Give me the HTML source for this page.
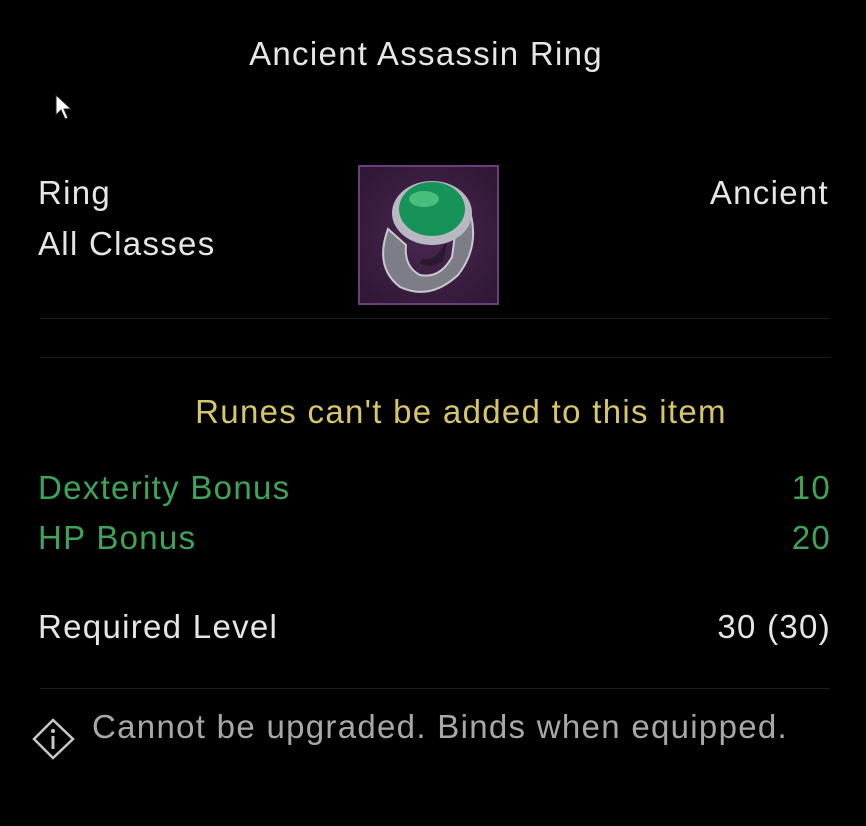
<!DOCTYPE html>
<html><head><meta charset="utf-8"><style>
html,body{margin:0;padding:0;background:#000;}
body{width:866px;height:826px;position:relative;overflow:hidden;font-family:"Liberation Sans",sans-serif;font-size:33px;letter-spacing:1.3px;color:#e6e6e6;}
.t{position:absolute;white-space:nowrap;line-height:1;}
.g{color:#3fa45a;}
.y{color:#d6c66a;}
.line{position:absolute;left:40px;width:790px;height:1px;background:#1d1d1d;}
</style></head><body>
<div class="t" style="left:0;width:852px;text-align:center;top:37px;">Ancient Assassin Ring</div>
<svg style="position:absolute;left:55px;top:94px" width="20" height="28" viewBox="0 0 20 28"><path d="M1 1 L1 21 L6 16 L10 25 L13 24 L9 15 L16 15 Z" fill="#fff" stroke="#222" stroke-width="1"/></svg>
<div class="t" style="left:38px;top:176px;">Ring</div>
<div class="t" style="left:38px;top:227px;">All Classes</div>
<div class="t" style="right:37px;top:176px;">Ancient</div>
<div style="position:absolute;left:358px;top:165px;width:141px;height:140px;box-sizing:border-box;border:2px solid #6a3f7a;background:radial-gradient(circle at 50% 50%,#4a2750,#2e1634);"></div>
<svg style="position:absolute;left:360px;top:167px" width="136" height="136" viewBox="0 0 136 136">
<path d="M28 62 Q14 100 40 120 Q70 134 98 108 Q120 80 110 45 L96 60 L92 90 Q80 112 60 108 Q44 100 46 78 Z" fill="#7d7d85" stroke="#c8c8d0" stroke-width="2"/>
<path d="M60 96 Q72 104 84 92 L88 70 Q78 95 62 92 Z" fill="#2a1a30"/>
<ellipse cx="72" cy="46" rx="40" ry="32" fill="#b8b8c2"/>
<ellipse cx="72" cy="42" rx="33" ry="27" fill="#17935a"/>
<ellipse cx="64" cy="32" rx="15" ry="8" fill="#5fd08a" opacity=".7"/>
</svg>
<div class="line" style="top:318px;"></div>
<div class="line" style="top:357px;"></div>
<div class="t y" style="left:0;width:922px;text-align:center;top:395px;">Runes can't be added to this item</div>
<div class="t g" style="left:38px;top:471px;">Dexterity Bonus</div>
<div class="t g" style="right:35px;top:471px;">10</div>
<div class="t g" style="left:38px;top:521px;">HP Bonus</div>
<div class="t g" style="right:35px;top:521px;">20</div>
<div class="t" style="left:38px;top:610px;">Required Level</div>
<div class="t" style="right:35px;top:610px;">30 (30)</div>
<div class="line" style="top:688px;"></div>
<svg style="position:absolute;left:32px;top:718px" width="44" height="42" viewBox="0 0 44 42"><path d="M21 2 L41 21 L21 40 L2 21 Z" fill="none" stroke="#c8c8c8" stroke-width="2.5"/><circle cx="21" cy="13" r="2" fill="#c8c8c8"/><rect x="19.5" y="18" width="3" height="13" fill="#c8c8c8"/></svg>
<div class="t" style="left:92px;top:710px;color:#a8a8a8;">Cannot be upgraded. Binds when equipped.</div>
</body></html>
